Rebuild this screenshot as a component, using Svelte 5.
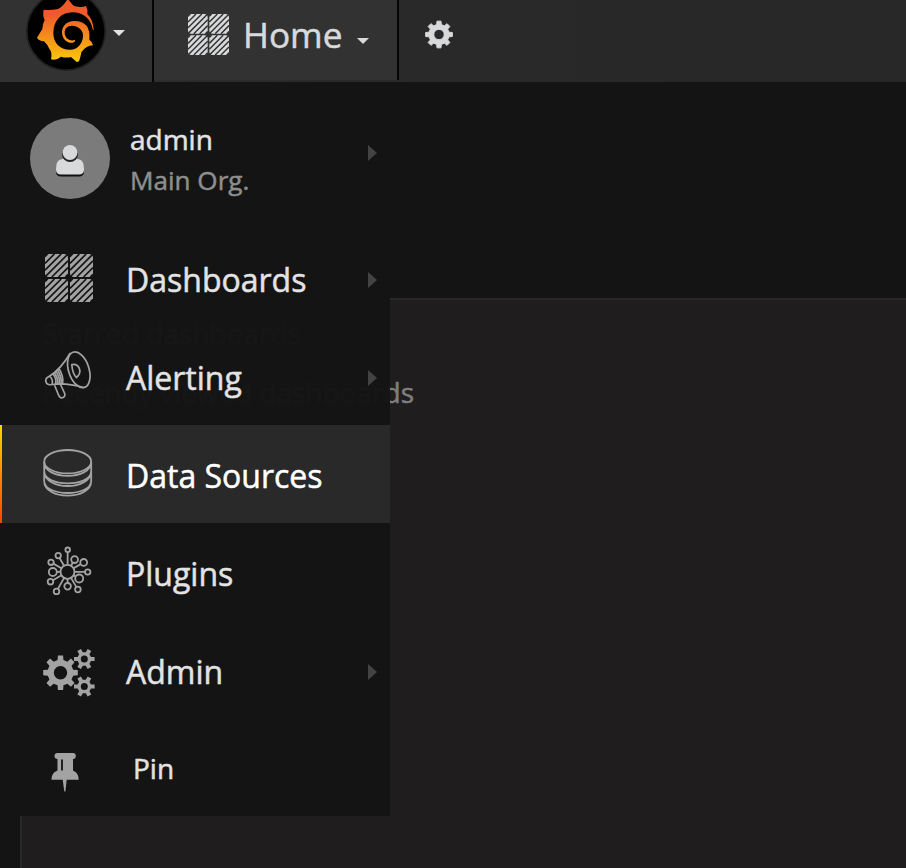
<script>
  const items = [
    { label: 'Dashboards', icon: 'grid', arrow: true },
    { label: 'Alerting', icon: 'horn', arrow: true },
    { label: 'Data Sources', icon: 'db', active: true },
    { label: 'Plugins', icon: 'plug' },
    { label: 'Admin', icon: 'gears', arrow: true },
    { label: 'Pin', icon: 'pin', small: true }
  ];

  // Nodes of the plugins icon: centre x, centre y, radius
  const nodes = [
    [37.7, 14.8, 2.3], [28.2, 20.6, 2.7], [44.6, 24.6, 3.4], [53.7, 27.4, 3.4],
    [21, 27.3, 2.7], [22.8, 37, 4], [57.7, 37, 2.7], [20.5, 46.7, 2.8],
    [49.2, 43.5, 4], [37.6, 51.3, 3.3], [47.9, 54.5, 2.8], [26.5, 56.4, 2.8]
  ];
  const hub = [37.5, 36.8, 7];

  // Diagonal hatching of one 23px tile
  const hatch = [2.6, 9.4, 16.2, 23, 29.8, 36.6, 43.4]
    .map((s) => `M${Math.max(0, s - 23)} ${Math.min(23, s)}L${Math.min(23, s)} ${Math.max(0, s - 23)}`)
    .join('');

  function spoke([x, y, r]) {
    const dx = x - hub[0], dy = y - hub[1], d = Math.hypot(dx, dy);
    return `M${hub[0] + (dx / d) * hub[2]} ${hub[1] + (dy / d) * hub[2]}L${x - (dx / d) * r} ${y - (dy / d) * r}`;
  }

  function gear(cx, cy, outer, inner, hole, teeth, turn = 0) {
    const step = (Math.PI * 2) / teeth;
    const pts = [];
    for (let i = 0; i < teeth; i++) {
      const a = i * step - Math.PI / 2 + turn;
      for (const [r, o] of [[inner, -0.29], [outer, -0.19], [outer, 0.19], [inner, 0.29]]) {
        pts.push(`${(cx + r * Math.cos(a + o * step)).toFixed(2)} ${(cy + r * Math.sin(a + o * step)).toFixed(2)}`);
      }
    }
    return `M${pts.join('L')}ZM${cx - hole} ${cy}a${hole} ${hole} 0 1 0 ${hole * 2} 0a${hole} ${hole} 0 1 0 ${-hole * 2} 0Z`;
  }
</script>

{#snippet grid(size, color, bg)}
  <svg width={size} height={size} viewBox="0 0 48 48">
    {#each [[0, 0], [25, 0], [0, 25], [25, 25]] as [x, y]}
      <g transform="translate({x} {y})">
        <rect width="23" height="23" rx="4" fill={color} />
        <path d={hatch} stroke={bg} stroke-width="1.7" />
      </g>
    {/each}
  </svg>
{/snippet}

<div class="page">
  <header>
    <div class="brand">
      <svg class="logo" width="80" height="80" viewBox="78 -27 240 240">
        <defs>
          <linearGradient id="flame" x1="0" y1="0" x2="0" y2="186" gradientUnits="userSpaceOnUse">
            <stop offset=".24" stop-color="#f05a2b" />
            <stop offset="1" stop-color="#fbca0a" />
          </linearGradient>
        </defs>
        <circle cx="198" cy="93" r="117.500" fill="#000" stroke="#202020" stroke-width="5" />
        <path fill="url(#flame)" d="M281 90C280 70 274 54 262 42Q264 28 258 18Q247 23 235 20Q221 20 216 12L206 0H201L193 11Q184 22 174 27Q153 31 131 29Q127 45 134 60Q127 72 127 87L111 113Q116 123 132 124Q142 133 147 145Q158 158 153 178Q170 182 183 170Q198 175 213 171L230 186L237 184Q243 166 244 157Q259 136 279 136Q278 126 268 119Q273 62 222 63C200 63 185 80 186 98C187 119 204 131 219 128L225 124V120C211 125 195 116 194 99C193 85 204 76 217 77C236 78 250 91 249 108C248 132 232 149 211 149C181 150 159 128 160 98C161 62 183 37 217 37C251 37 273 57 279 90Z" />
      </svg>
      <i class="caret"></i>
    </div>
    <div class="home">
      {@render grid(41, '#d8d9da', '#333')}
      <span>Home</span>
      <i class="caret home-caret"></i>
    </div>
    <svg class="cog" width="30" height="30" viewBox="0 0 30 30">
      <path fill-rule="evenodd" fill="#d8d9da" stroke="#d8d9da" stroke-width="1" stroke-linejoin="round" d={gear(15, 15.5, 13.5, 10.2, 5.2, 8)} />
    </svg>
  </header>

  <main>
    <p>Starred dashboards</p>
    <p>Recently viewed dashboards</p>
  </main>

  <nav>
    <div class="profile">
      <div class="avatar">
        <svg width="28" height="34" viewBox="0 0 28 34">
          <path fill="#111" d="M0 27.500C0 20 2 17.500 7 17H21C26 17.500 28 20 28 27.500Q28 32.500 23 32.500H5Q0 32.500 0 27.500Z" />
          <path fill="#d8d9da" d="M0 25.500C0 18 2 15.500 7 15H21C26 15.500 28 18 28 25.500Q28 30.500 23 30.500H5Q0 30.500 0 25.500Z" />
          <circle cx="14" cy="10" r="8" fill="#222" />
          <circle cx="14" cy="8.500" r="7.500" fill="#d8d9da" />
        </svg>
      </div>
      <div class="who">
        <span class="name">admin</span>
        <span class="org">Main Org.</span>
      </div>
      <i class="arrow"></i>
    </div>

    {#each items as item}
      <div class="item" class:active={item.active} class:small={item.small}>
        <div class="icon {item.icon}">
          {#if item.icon === 'grid'}
            {@render grid(48, '#a3a3a3', '#141414')}
          {:else if item.icon === 'horn'}
            <svg width="80" height="80" viewBox="0 0 80 80" fill="none" stroke="#a3a3a3" stroke-width="1.7" stroke-linecap="round" stroke-linejoin="round">
              <ellipse cx="48.800" cy="34.800" rx="10.200" ry="18.500" transform="rotate(-18 48.800 34.800)" />
              <path d="M40 18.500Q31 34 19 41.500M53.500 52.500Q36 47.500 22 49.500M19 41.500Q14.500 43.500 16.200 47.500Q17.500 50.500 22 49.500M20 41.500Q23.500 45 22 49.500M23 39Q27 44 25.500 49M26 36.500Q30.500 43 29 48.500M29 33.500Q34 42 32.500 48.500M24.500 50L28.500 60C30.500 65 36.500 62.500 34.500 58L30.500 49.500" />
              <path d="M27.500 35Q32 42 31 48.500M24.500 38Q28.500 44 27.500 48.500M41.800 29.500C49 28 53 37 46.500 42.500Q42.500 39 41.800 29.500Z" />
            </svg>
          {:else if item.icon === 'db'}
            <svg width="80" height="80" viewBox="0 0 80 80" fill="none" stroke="#a3a3a3" stroke-width="1.800">
              <ellipse cx="37.700" cy="26.700" rx="23.500" ry="11.700" />
              <path d="M14.200 27C14.200 45.500 61.200 45.500 61.200 27M14.200 27V36C14.200 52.500 61.200 52.500 61.200 36V27M14.200 36C14.200 56 61.200 56 61.200 36M14.200 36V46C14.200 62 61.200 62 61.200 46V36M14.200 46C14.200 65.500 61.200 65.500 61.200 46" />
            </svg>
          {:else if item.icon === 'plug'}
            <svg width="80" height="80" viewBox="0 0 80 80" fill="none" stroke="#a3a3a3" stroke-width="1.800">
              <circle cx={hub[0]} cy={hub[1]} r={hub[2]} />
              {#each nodes as n}
                <circle cx={n[0]} cy={n[1]} r={n[2]} />
                <path d={spoke(n)} />
              {/each}
            </svg>
          {:else if item.icon === 'gears'}
            <svg width="80" height="80" viewBox="0 0 80 80" fill="#a3a3a3" fill-rule="evenodd">
              <path d={gear(30.5, 37.7, 17.5, 13, 6.7, 8)} />
              <path d={gear(54.3, 24, 10.5, 7, 3.5, 6, Math.PI / 6)} />
              <path d={gear(54.3, 51.5, 10.5, 7, 3.5, 6, Math.PI / 6)} />
            </svg>
          {:else}
            <svg width="80" height="80" viewBox="0 0 80 80">
              <path fill="#a3a3a3" d="M37.500 18H53Q55.800 18 55.800 21Q55.800 24 53 24V35.500C56.500 37 58.700 40 58.700 44.700H46.700L45.400 56.600H44.300L42.700 44.700H31.500C31.500 40 33.500 37 37.500 35.500V24Q34.500 24 34.500 21Q34.500 18 37.500 18Z" />
              <path d="M42 24.500V35.500" stroke="#141414" stroke-width="1.800" />
            </svg>
          {/if}
        </div>
        <span>{item.label}</span>
        {#if item.arrow}<i class="arrow"></i>{/if}
      </div>
    {/each}
  </nav>
</div>

<style>
  .page {
    position: relative;
    display: flex;
    flex-direction: column;
    width: 906px;
    height: 868px;
    overflow: hidden;
    background: #141414;
    font-family: 'Open Sans', sans-serif;
    color: #e3e3e3;
    -webkit-text-stroke: .5px currentColor;
  }
  svg { display: block; flex: none; }
  header {
    display: flex;
    height: 82px;
    flex: none;
    background: linear-gradient(90deg, #2f2f2f, #292929 45%, #282828);
  }
  .brand {
    display: flex;
    box-sizing: border-box;
    width: 154px;
    padding-left: 26px;
    background: #323232;
    border-right: 2px solid #050505;
  }
  .logo { margin-top: -9px; }
  .caret {
    width: 0;
    height: 0;
    margin: 30px 0 0 7px;
    border: 6px solid transparent;
    border-top-color: #e3e3e3;
    border-bottom: 0;
  }
  .home {
    display: flex;
    box-sizing: border-box;
    width: 245px;
    height: 80px;
    padding: 14px 0 0 34px;
    background: #323232;
    border-right: 2px solid #050505;
  }
  .home span {
    margin: -4px 0 0 14px;
    font-size: 35.2px;
    line-height: 49px;
    color: #d8d9da;
  }
  .home-caret { margin: 24px 0 0 15px; border-top-color: #d8d9da; }
  .cog { margin: 19px 0 0 25px; }
  main {
    box-sizing: border-box;
    flex: 1;
    margin: 216px 0 0 20px;
    padding: 4px 0 0 20px;
    background: #1f1d1e;
    border: solid #292929;
    border-width: 2px 0 0 2px;
    font-size: 28.1px;
    color: #7f7f7f;
  }
  main p { margin: 0; height: 59px; line-height: 59px; }
  nav {
    position: absolute;
    top: 82px;
    left: 0;
    width: 390px;
    height: 734px;
    background: rgba(20, 20, 20, .98);
  }
  .profile {
    display: flex;
    box-sizing: border-box;
    height: 147px;
    padding: 36px 0 0 30px;
  }
  .avatar {
    display: flex;
    align-items: center;
    justify-content: center;
    box-sizing: border-box;
    padding-top: 4px;
    width: 80px;
    height: 81px;
    border-radius: 50%;
    background: #7b7b7b;
  }
  .who { display: flex; flex-direction: column; margin-left: 20px; width: 238px; }
  .name { font-size: 28px; line-height: 41px; margin-top: 1px; }
  .org { font-size: 26.1px; line-height: 41px; color: #8e8e8e; }
  .arrow {
    width: 0;
    height: 0;
    border: 8px solid transparent;
    border-left: 9px solid #434343;
    border-right: 0;
  }
  .profile .arrow { margin-top: 27px; }
  .item {
    position: relative;
    display: flex;
    box-sizing: border-box;
    height: 98px;
    align-items: center;
    font-size: 32px;
  }
  .item span { width: 242px; margin: 3px 0 0 16px; }
  .item .arrow { margin-top: 4px; }
  .icon {
    display: flex;
    align-items: center;
    justify-content: center;
    width: 80px;
    height: 80px;
    margin: 0 0 0 30px;
  }
  .grid { box-sizing: border-box; padding-right: 2px; }
  .horn { margin-bottom: 2px; }
  .db { margin-top: 2px; }
  .plug { margin-top: 6px; }
  .gears { margin-top: 10px; }
  .pin { margin-top: 14px; }
  .active { background: #292929; color: #fff; }
  .active::before {
    content: '';
    position: absolute;
    top: 0;
    left: 0;
    width: 2px;
    height: 98px;
    background: linear-gradient(#ffd500, #ff4400);
  }
  .small { font-size: 28px; }
  .small .icon { margin-left: 20px; }
  .small span { margin: 0 0 0 33px; }
</style>
